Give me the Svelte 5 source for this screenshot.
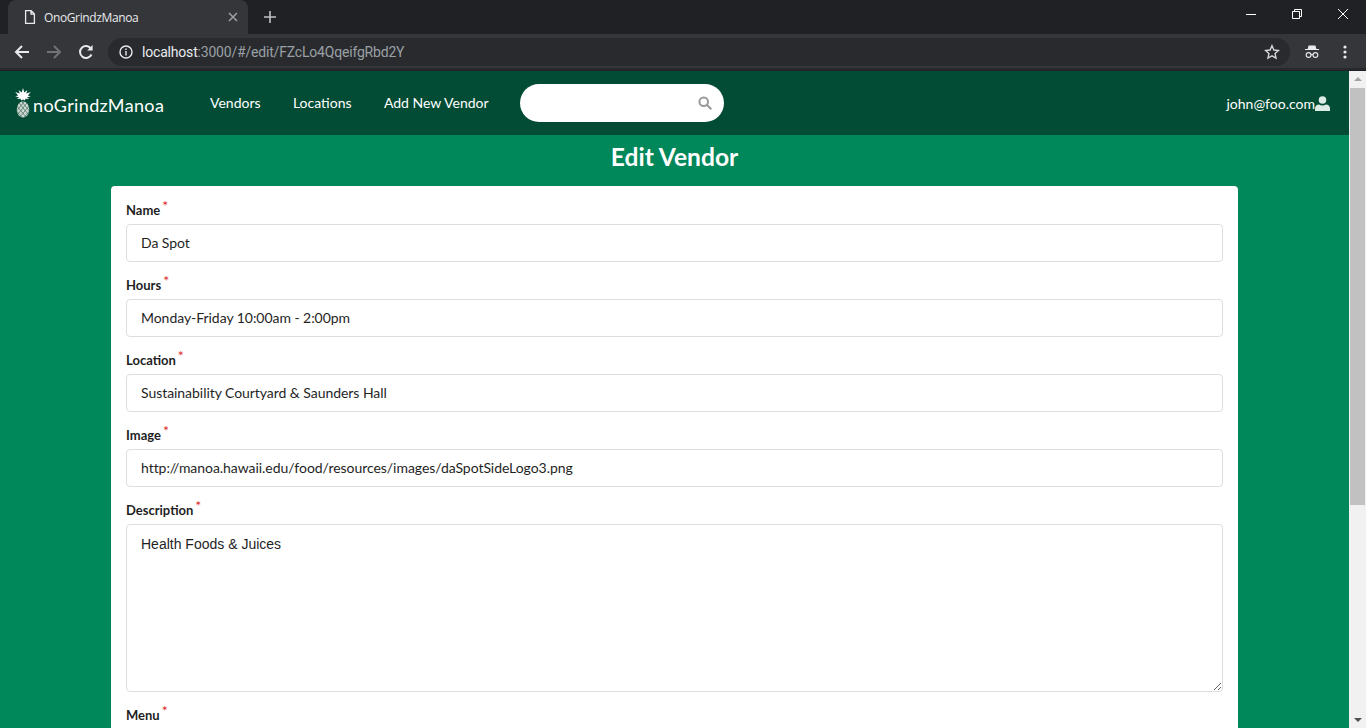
<script>
  const fields = [
    { label: "Name", value: "Da Spot" },
    { label: "Hours", value: "Monday-Friday 10:00am - 2:00pm" },
    { label: "Location", value: "Sustainability Courtyard & Saunders Hall" },
    { label: "Image", value: "http://manoa.hawaii.edu/food/resources/images/daSpotSideLogo3.png" }
  ];
  const links = ["Vendors", "Locations", "Add New Vendor"];
</script>

<div class="window">
  <div class="tabstrip">
    <div class="tab">
      <svg class="page-icon" width="16" height="16" viewBox="0 0 16 16" fill="none" stroke="#e8eaed" stroke-width="1.3">
        <path d="M3.600 1.700h5.600l3.200 3.200v9.400H3.600z M9 1.700v3.400h3.400" />
      </svg>
      <span class="tab-title">OnoGrindzManoa</span>
      <svg class="tab-close" width="10" height="10" viewBox="0 0 10 10" stroke="#9aa0a6" stroke-width="1.6">
        <path d="M1 1l8 8M9 1l-8 8" />
      </svg>
    </div>
    <svg class="new-tab" width="12" height="12" viewBox="0 0 12 12" stroke="#bdc1c6" stroke-width="1.6">
      <path d="M6 0v12M0 6h12" />
    </svg>
    <div class="win-btns">
      <svg width="10" height="10" viewBox="0 0 10 10" stroke="#fff" fill="none"><path d="M0 5.500h10" /></svg>
      <svg width="10" height="10" viewBox="0 0 10 10" stroke="#fff" fill="none"><path d="M.5 2.500h7v7h-7z M2.500 2.500v-2h7v7h-2" /></svg>
      <svg width="10" height="10" viewBox="0 0 10 10" stroke="#fff" fill="none"><path d="M0 0l10 10M10 0L0 10" /></svg>
    </div>
  </div>

  <div class="toolbar">
    <svg class="tool" width="16" height="16" viewBox="0 0 16 16" fill="none" stroke="#e8eaed" stroke-width="2"><path d="M15 8H2M8 2L2 8l6 6" /></svg>
    <svg class="tool" width="16" height="16" viewBox="0 0 16 16" fill="none" stroke="#6f7276" stroke-width="2"><path d="M1 8h13M8 2l6 6-6 6" /></svg>
    <svg class="tool" width="16" height="16" viewBox="0 0 16 16" fill="none" stroke="#e8eaed" stroke-width="2"><path d="M13.500 10.500A6 6 0 1 1 13 4.600" /><path d="M14.600 1v5.400H9.200z" fill="#e8eaed" stroke="none" /></svg>
    <div class="omnibox">
      <svg width="16" height="16" viewBox="0 0 16 16" fill="none" stroke="#e8eaed" stroke-width="1.400"><circle cx="8" cy="8" r="6" /><path d="M8 7v4.400M8 4.400v1.500" /></svg>
      <span class="url"><b>localhost</b>:3000/#/edit/FZcLo4QqeifgRbd2Y</span>
      <svg class="star" width="16" height="16" viewBox="0 0 16 16" fill="none" stroke="#d5d7da" stroke-width="1.400"><path d="M8 1.800l1.900 4.200 4.600.5-3.400 3.100.9 4.500-4-2.300-4 2.300.9-4.500-3.400-3.100 4.600-.5z" /></svg>
    </div>
    <svg class="incognito" width="16" height="16" viewBox="0 0 16 16" fill="#e8eaed"><path d="M4.600 1.500h6.800l1 3.500H15v1H1V5h2.600z" /><g fill="none" stroke="#e8eaed" stroke-width="1.100"><circle cx="4.600" cy="11" r="2.400" /><circle cx="11.400" cy="11" r="2.400" /><path d="M7 10.600h2" /></g></svg>
    <svg class="dots" width="4" height="14" viewBox="0 0 4 14" fill="#e8eaed"><circle cx="2" cy="2" r="1.600" /><circle cx="2" cy="7" r="1.600" /><circle cx="2" cy="12" r="1.600" /></svg>
  </div>

  <div class="viewport">
    <div class="page">
      <nav class="navbar">
        <div class="logo">
          <svg width="16" height="30" viewBox="0 0 16 30">
            <path d="M8 0l1.300 4.500 3-2.500-1 3.500L15.800 4l-3 3.400 3 .8-4 1.200 2.600 1.600-4-.2-.4 1.700-2-1-2 1-.4-1.700-4 .2 2.600-1.600-4-1.200 3-.8-3-3.400 4.500 1.500-1-3.500 3 2.500z" fill="#fff" />
            <ellipse cx="8" cy="21.500" rx="6.200" ry="8" fill="#cfd8d3" />
            <path d="M2 18l9 11M4 15l9 11M7 14l7.500 9M1.500 23l5 6M14 18L5 29M12 15L3 26M9 14l-7.500 9M14.500 23l-5 6" stroke="#3c6b59" stroke-width=".7" />
          </svg>
          <span class="logo-text">noGrindzManoa</span>
        </div>
        <div class="links">
          {#each links as link}
            <a href="#top">{link}</a>
          {/each}
        </div>
        <div class="search">
          <input type="text" />
          <svg width="14" height="14" viewBox="0 0 14 14" fill="none" stroke="#999" stroke-width="2"><circle cx="5.700" cy="5.700" r="4.300" /><path d="M9 9l4.300 4.300" /></svg>
        </div>
        <div class="user">
          john@foo.com
          <svg width="15" height="15" viewBox="0 0 15 15" fill="#dcebe5"><circle cx="7.500" cy="4" r="3.800" /><path d="M0 15v-2.500C0 10 2 8.500 4 8.500c1 .6 2.200 1 3.500 1s2.500-.4 3.500-1c2 0 4 1.500 4 4V15z" /></svg>
        </div>
      </nav>

      <main class="content">
        <h2>Edit Vendor</h2>
        <form class="card">
          {#each fields as field}
            <div class="field">
              <label>{field.label}<i>*</i>
                <input type="text" value={field.value} />
              </label>
            </div>
          {/each}
          <div class="field">
            <label>Description<i>*</i>
              <textarea>Health Foods & Juices</textarea>
            </label>
          </div>
          <div class="field">
            <label>Menu<i>*</i>
              <input type="text" />
            </label>
          </div>
        </form>
      </main>
    </div>

    <div class="scrollbar">
      <span class="arrow up"></span>
      <div class="thumb"></div>
      <span class="arrow down"></span>
    </div>
  </div>
</div>

<style>
  :global(body) {
    margin: 0;
    background: #00875a;
  }

  .window {
    height: 728px;
    width: 1366px;
    display: flex;
    flex-direction: column;
    overflow: hidden;
    font-family: Lato, sans-serif;
  }

  .tabstrip {
    height: 34px;
    flex: none;
    background: #202124;
    display: flex;
    align-items: flex-end;
    padding-left: 8px;
  }

  .tab {
    width: 240px;
    height: 34px;
    box-sizing: border-box;
    background: #35363a;
    border-radius: 8px 8px 0 0;
    display: flex;
    align-items: center;
    padding: 0 10px 0 14px;
  }

  .page-icon {
    margin-right: 6px;
  }

  .tab-title {
    flex: 1;
    color: #e8eaed;
    font: 12px "Open Sans", sans-serif;
    letter-spacing: -0.38px;
  }

  .new-tab {
    margin: 0 0 11px 16px;
  }

  .win-btns {
    margin-left: auto;
    display: flex;
    gap: 36px;
    padding-right: 18px;
    align-self: flex-start;
    padding-top: 9px;
  }

  .toolbar {
    height: 36px;
    flex: none;
    box-sizing: border-box;
    background: #35363a;
    border-bottom: 2px solid #28292c;
    display: flex;
    align-items: center;
    padding: 2px 0 0 14px;
  }

  .tool {
    margin-right: 16px;
  }

  .omnibox {
    width: 1182px;
    height: 28px;
    margin-left: -2px;
    box-sizing: border-box;
    background: #292a2d;
    border-radius: 14px;
    display: flex;
    align-items: center;
    padding: 0 10px;
  }

  .url {
    margin-left: 8px;
    color: #9aa0a6;
    font: 14px Roboto, sans-serif;
    letter-spacing: -0.19px;
  }

  .url b {
    color: #e8eaed;
    font-weight: 400;
  }

  .star {
    margin-left: auto;
  }

  .incognito {
    margin-left: 14px;
  }

  .dots {
    margin-left: 23px;
  }

  .viewport {
    flex: 1;
    display: flex;
    min-height: 0;
    border-top: 1px solid #202124;
  }

  .page {
    flex: 1;
    min-width: 0;
    overflow: hidden;
  }

  .navbar {
    height: 64px;
    background: #024c35;
    display: flex;
    align-items: center;
    padding-left: 15px;
    color: #fff;
    font-size: 14px;
  }

  .logo {
    display: flex;
    align-items: center;
    width: 195px;
  }

  .logo-text {
    font: 400 18px Lato, sans-serif;
    margin: 3px 0 0 2px;
    letter-spacing: 0.35px;
  }

  .links {
    display: flex;
    gap: 32.4px;
    padding-bottom: 2px;
  }

  .links a {
    color: #fff;
    text-decoration: none;
  }

  .search {
    margin-left: 31.2px;
    width: 204px;
    height: 38px;
    background: #fff;
    border-radius: 19px;
    display: flex;
    align-items: center;
    padding-right: 12px;
    box-sizing: border-box;
  }

  .search input {
    flex: 1;
    min-width: 0;
    border: none;
    outline: none;
    background: none;
  }

  .user {
    margin-left: auto;
    margin-right: 19px;
    display: flex;
    align-items: center;
  }

  .content h2 {
    margin: 0;
    padding-top: 7px;
    height: 51px;
    box-sizing: border-box;
    text-align: center;
    font-size: 24.6px;
    line-height: 29px;
    font-weight: 700;
    color: #fff;
  }

  .card {
    width: 1127px;
    margin: 0 auto;
    box-sizing: border-box;
    background: #fff;
    border-radius: 4px;
    padding: 15px 15px 0;
  }

  .field {
    margin-bottom: 14px;
  }

  .field label {
    display: block;
    color: #1f1f1f;
    font-size: 13px;
    font-weight: 700;
    line-height: 18px;
  }

  .field i {
    color: #db2828;
    font-style: normal;
    font-weight: 400;
    font-size: 14px;
    margin-left: 2px;
    position: relative;
    top: -4px;
  }

  .field input,
  .field textarea {
    display: block;
    width: 100%;
    box-sizing: border-box;
    margin-top: 5px;
    border: 1px solid #dededf;
    border-radius: 4px;
    padding: 0 14px 2px;
    height: 38px;
    font: 14px Lato, sans-serif;
    letter-spacing: -0.05px;
    color: #1f1f1f;
    outline: none;
  }

  .field textarea {
    height: 168px;
    padding: 11px 14px;
    font-family: "Liberation Sans", sans-serif;
    letter-spacing: 0;
    resize: vertical;
  }

  .scrollbar {
    width: 17px;
    flex: none;
    background: #f1f1f1;
    display: flex;
    flex-direction: column;
    align-items: center;
    box-sizing: border-box;
  }

  .arrow {
    width: 0;
    height: 0;
    margin: 6px 0;
    border-left: 4px solid transparent;
    border-right: 4px solid transparent;
  }

  .arrow.up {
    border-bottom: 4px solid #a3a3a3;
    margin-bottom: 7px;
  }

  .arrow.down {
    border-top: 4px solid #505050;
  }

  .thumb {
    width: 15px;
    height: 417px;
    margin-bottom: auto;
    background: #c1c1c1;
  }
</style>
